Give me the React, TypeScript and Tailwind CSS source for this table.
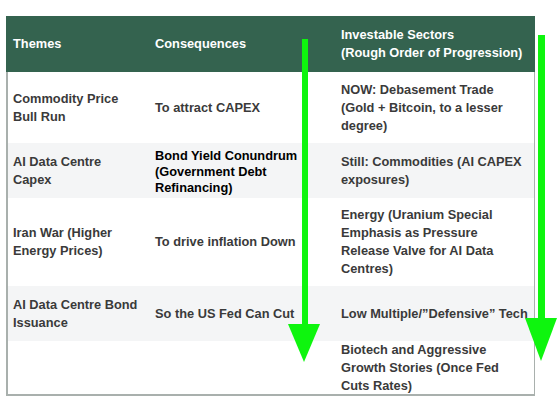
import React from "react";

const rows = [
  {
    h: "h-[71px]",
    bg: "bg-white",
    theme: ["Commodity Price", "Bull Run"],
    cons: ["To attract CAPEX"],
    sector: ["NOW: Debasement Trade", "(Gold + Bitcoin, to a lesser", "degree)"],
  },
  {
    h: "h-[55px]",
    bg: "bg-[#f4f5f6]",
    theme: ["AI Data Centre", "Capex"],
    cons: ["Bond Yield Conundrum", "(Government Debt", "Refinancing)"],
    dark: true,
    sector: ["Still: Commodities (AI CAPEX", "exposures)"],
  },
  {
    h: "h-[88px]",
    bg: "bg-white",
    theme: ["Iran War (Higher", "Energy Prices)"],
    cons: ["To drive inflation Down"],
    sector: ["Energy (Uranium Special", "Emphasis as Pressure", "Release Valve for AI Data", "Centres)"],
  },
  {
    h: "h-[55px]",
    bg: "bg-[#f4f5f6]",
    theme: ["AI Data Centre Bond", "Issuance"],
    cons: ["So the US Fed Can Cut"],
    sector: ["Low Multiple/\u201dDefensive\u201d Tech"],
  },
  {
    h: "h-[53px]",
    bg: "bg-white",
    theme: [],
    cons: [],
    sector: ["Biotech and Aggressive", "Growth Stories (Once Fed", "Cuts Rates)"],
  },
];

function Lines({ items }: { items: string[] }) {
  return (
    <>
      {items.map((t, i) => (
        <div key={i} className="whitespace-nowrap">
          {t}
        </div>
      ))}
    </>
  );
}

export default function App() {
  return (
    <div className="relative w-[560px] h-[406px] bg-white font-['Liberation_Sans',Arial,sans-serif] text-[12.8px] font-bold leading-[18px] text-[#3a3a3a] overflow-hidden">
      <div className="ml-[6px] pt-[16px] w-[529px]">
        {/* Header */}
        <div className="grid grid-cols-[142px_186px_201px] h-[56px] bg-[#34634f] text-white">
          <div className="flex items-center pl-[7px]">Themes</div>
          <div className="flex items-center pl-[7px]">Consequences</div>
          <div className="flex flex-col justify-center pl-[7px]">
            <div>Investable Sectors</div>
            <div className="whitespace-nowrap">(Rough Order of Progression)</div>
          </div>
        </div>

        {/* Body */}
        <div className="border-l-2 border-b-2 border-r border-[#a9b0ad]">
          {rows.map((r, i) => (
            <div key={i} className={`grid grid-cols-[140px_186px_200px] ${r.h} ${r.bg}`}>
              <div className="flex flex-col justify-center pl-[5px]">
                <Lines items={r.theme} />
              </div>
              <div
                className={
                  r.dark
                    ? "flex flex-col justify-center pl-[7px] pt-[2px] text-black leading-[16px]"
                    : "flex flex-col justify-center pl-[7px]"
                }
              >
                <Lines items={r.cons} />
              </div>
              <div className="flex flex-col justify-center pl-[7px]">
                <Lines items={r.sector} />
              </div>
            </div>
          ))}
        </div>
      </div>

      {/* Green arrows drawn over the table */}
      <svg className="absolute left-0 top-0" width="560" height="406" viewBox="0 0 560 406">
        <rect x="302" y="39" width="6" height="288" fill="#0ef50e" />
        <polygon points="288,324 320,324 304,362" fill="#0ef50e" />
        <rect x="538" y="35" width="7" height="286" fill="#0ef50e" />
        <polygon points="525,318 557,318 541,361" fill="#0ef50e" />
      </svg>
    </div>
  );
}
